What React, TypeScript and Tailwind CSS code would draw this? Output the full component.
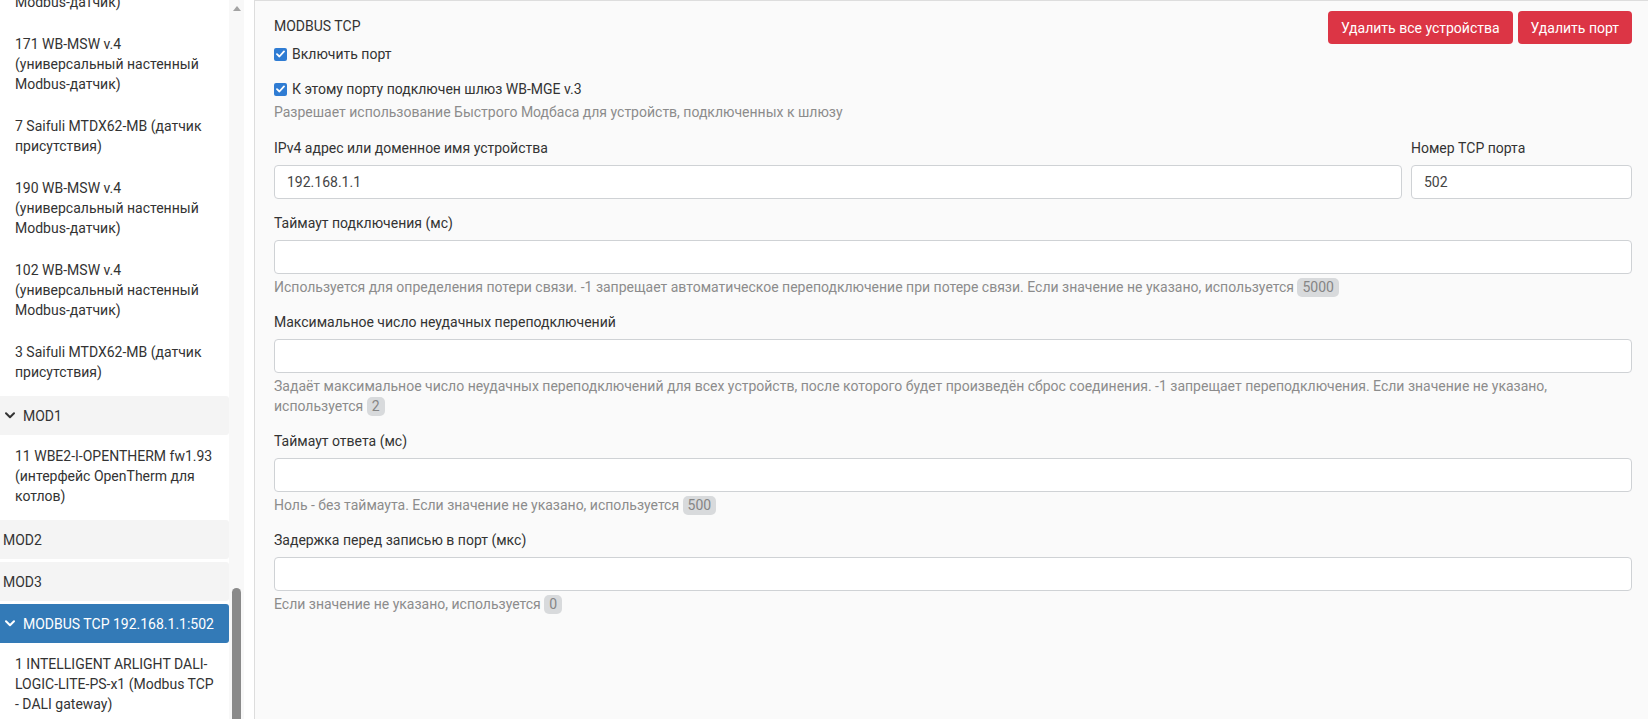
import React from "react";

type Entry =
  | { kind: "device"; text: string; first?: boolean }
  | { kind: "port"; text: string; open?: boolean; active?: boolean };

const tree: Entry[] = [
  { kind: "device", text: "20 WB-MSW v.4 (универсальный настенный Modbus-датчик)", first: true },
  { kind: "device", text: "171 WB-MSW v.4 (универсальный настенный Modbus-датчик)" },
  { kind: "device", text: "7 Saifuli MTDX62-MB (датчик присутствия)" },
  { kind: "device", text: "190 WB-MSW v.4 (универсальный настенный Modbus-датчик)" },
  { kind: "device", text: "102 WB-MSW v.4 (универсальный настенный Modbus-датчик)" },
  { kind: "device", text: "3 Saifuli MTDX62-MB (датчик присутствия)" },
  { kind: "port", text: "MOD1", open: true },
  { kind: "device", text: "11 WBE2-I-OPENTHERM fw1.93 (интерфейс OpenTherm для котлов)" },
  { kind: "port", text: "MOD2" },
  { kind: "port", text: "MOD3" },
  { kind: "port", text: "MODBUS TCP 192.168.1.1:502", open: true, active: true },
  { kind: "device", text: "1 INTELLIGENT ARLIGHT DALI-LOGIC-LITE-PS-x1 (Modbus TCP - DALI gateway)" },
  { kind: "device", text: "2 INTELLIGENT ARLIGHT DALI-LOGIC-LITE-PS-x1 (Modbus TCP - DALI gateway)" },
];

function Chevron({ color }: { color: string }) {
  return (
    <svg width="10" height="7" viewBox="0 0 10 7" className="ml-[2px] mr-[8px] shrink-0">
      <path d="M1 1.3 L5 5.3 L9 1.3" fill="none" stroke={color} strokeWidth="2" strokeLinecap="round" strokeLinejoin="round" />
    </svg>
  );
}

function Sidebar() {
  return (
    <div className="flex h-full shrink-0">
      <div className="w-[229px] overflow-hidden bg-white">
        {tree.map((e, i) =>
          e.kind === "device" ? (
            <div key={i} className={`px-[15px] py-[11px] leading-5 ${e.first ? "mt-[-59px]" : ""}`}>
              {e.text}
            </div>
          ) : (
            <div
              key={i}
              className={`mt-[3px] flex h-[39px] items-center rounded-r-[3px] pl-[3px] leading-5 ${
                e.active ? "bg-[#337ab7] text-white" : "bg-[#f4f4f4] text-[#333]"
              }`}
            >
              {e.open && <Chevron color={e.active ? "#ffffff" : "#333333"} />}
              <span>{e.text}</span>
            </div>
          )
        )}
      </div>
      {/* scrollbar */}
      <div className="flex w-[15px] flex-col items-center bg-[#f8f8f8]">
        <svg width="8" height="5" viewBox="0 0 8 5" className="mt-[6px] shrink-0">
          <polygon points="0,5 4,0 8,5" fill="#a3a3a3" />
        </svg>
        <div className="mt-[577px] w-[9px] flex-1 rounded-t-[5px] bg-[#8a8a8a]" />
      </div>
      <div className="w-[10px] bg-white" />
    </div>
  );
}

function Check() {
  return (
    <span className="mr-[5px] flex h-[13px] w-[13px] shrink-0 items-center justify-center rounded-[2px] bg-[#2f7cd3]">
      <svg width="9" height="8" viewBox="0 0 9 8">
        <path d="M1 4.2 L3.4 6.5 L8 1.4" fill="none" stroke="#fff" strokeWidth="1.8" strokeLinecap="round" strokeLinejoin="round" />
      </svg>
    </span>
  );
}

function Badge({ children }: { children: React.ReactNode }) {
  return (
    <span className="inline-block rounded-[5px] bg-[#d8dadc] px-[5px] leading-[19px] text-[#858585]">
      {children}
    </span>
  );
}

function TextInput({ value }: { value?: string }) {
  return (
    <input
      type="text"
      defaultValue={value}
      className="block h-[34px] w-full rounded-[4px] border border-[#cfd2d5] bg-white px-[12px] text-[14px] text-[#444] outline-none"
    />
  );
}

function Field({ label, help, className }: { label: string; help: React.ReactNode; className?: string }) {
  return (
    <div className={className}>
      <div className="mb-[7px] leading-5">{label}</div>
      <TextInput />
      <div className="mt-[3px] leading-5 text-[#8c8c8c]">{help}</div>
    </div>
  );
}

export default function App() {
  return (
    <div className="flex h-[719px] w-full overflow-hidden bg-white font-['Roboto',sans-serif] text-[14px] text-[#333]">
      <Sidebar />
      <main className="flex-1 border-l border-t border-[#dddddd] bg-[#fafafa] pl-[19px] pr-4 pt-[10px]">
        <div className="flex items-start justify-between">
          <div className="pt-[5px] leading-5">MODBUS TCP</div>
          <div className="flex gap-[5px]">
            <button className="h-[33px] rounded-[4px] bg-[#dc3545] px-[13px] leading-5 text-white">
              Удалить все устройства
            </button>
            <button className="h-[33px] rounded-[4px] bg-[#dc3545] px-[13px] leading-5 text-white">
              Удалить порт
            </button>
          </div>
        </div>

        <label className="flex items-center leading-5">
          <Check />
          Включить порт
        </label>
        <label className="mt-[15px] flex items-center leading-5">
          <Check />
          К этому порту подключен шлюз WB-MGE v.3
        </label>
        <div className="mt-[3px] leading-5 text-[#8c8c8c]">
          Разрешает использование Быстрого Модбаса для устройств, подключенных к шлюзу
        </div>

        <div className="mt-[16px] flex gap-[9px]">
          <div className="flex-1">
            <div className="mb-[7px] leading-5">IPv4 адрес или доменное имя устройства</div>
            <TextInput value="192.168.1.1" />
          </div>
          <div className="w-[221px]">
            <div className="mb-[7px] leading-5">Номер TCP порта</div>
            <TextInput value="502" />
          </div>
        </div>

        <Field
          className="mt-[14px]"
          label="Таймаут подключения (мс)"
          help={
            <>
              Используется для определения потери связи. -1 запрещает автоматическое переподключение при потере связи. Если
              значение не указано, используется <Badge>5000</Badge>
            </>
          }
        />
        <Field
          className="mt-[15px]"
          label="Максимальное число неудачных переподключений"
          help={
            <>
              Задаёт максимальное число неудачных переподключений для всех устройств, после которого будет произведён сброс
              соединения. -1 запрещает переподключения. Если значение не указано, используется <Badge>2</Badge>
            </>
          }
        />
        <Field
          className="mt-[15px]"
          label="Таймаут ответа (мс)"
          help={
            <>
              Ноль - без таймаута. Если значение не указано, используется <Badge>500</Badge>
            </>
          }
        />
        <Field
          className="mt-[15px]"
          label="Задержка перед записью в порт (мкс)"
          help={
            <>
              Если значение не указано, используется <Badge>0</Badge>
            </>
          }
        />
      </main>
    </div>
  );
}
